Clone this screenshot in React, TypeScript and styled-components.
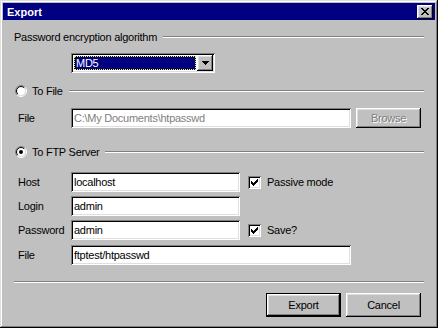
import React from "react";
import styled, { createGlobalStyle } from "styled-components";

const GlobalStyle = createGlobalStyle`
  body {
    margin: 0;
    background: #c0c0c0;
    font-family: "Liberation Sans", Arial, sans-serif;
    font-size: 11px;
    letter-spacing: -0.25px;
    color: #000;
  }
`;

const raised = `
  box-shadow: inset -1px -1px #000, inset 1px 1px #fff,
    inset -2px -2px #808080, inset 2px 2px #dfdfdf;
`;

const sunken = `
  box-shadow: inset 1px 1px #808080, inset -1px -1px #fff,
    inset 2px 2px #000, inset -2px -2px #dfdfdf;
`;

const Window = styled.div`
  width: 438px;
  height: 328px;
  box-sizing: border-box;
  padding: 3px;
  background: #c0c0c0;
  box-shadow: inset -1px -1px #000, inset 1px 1px #dfdfdf,
    inset -2px -2px #808080, inset 2px 2px #fff;
  display: flex;
  flex-direction: column;
`;

const TitleBar = styled.div`
  height: 17px;
  background: #000080;
  display: flex;
  align-items: center;
  justify-content: space-between;
  padding: 0 2px 0 4px;
`;

const Title = styled.span`
  color: #fff;
  font-weight: bold;
  font-size: 11px;
  letter-spacing: 0;
`;

const CloseButton = styled.div`
  width: 16px;
  height: 14px;
  background: #c0c0c0;
  ${raised}
  display: flex;
  align-items: center;
  justify-content: center;
`;

const Body = styled.div`
  display: flex;
  flex-direction: column;
  padding: 0 11px;
`;

const GroupHeader = styled.div<{ $top: number }>`
  margin-top: ${(p) => p.$top}px;
  height: 14px;
  display: flex;
  align-items: center;
  gap: 6px;
`;

const Groove = styled.div`
  flex: 1;
  height: 0;
  border-top: 1px solid #808080;
  border-bottom: 1px solid #fff;
`;

const RadioLabel = styled.label`
  display: flex;
  align-items: center;
  gap: 5px;
  padding-left: 1px;
`;

const SelectRow = styled.div`
  margin-top: 9px;
  padding-left: 57px;
  display: flex;
`;

const Combo = styled.div`
  width: 144px;
  height: 20px;
  box-sizing: border-box;
  padding: 2px;
  background: #fff;
  ${sunken}
  display: flex;
`;

const ComboValue = styled.div`
  flex: 1;
  margin: 1px;
  background: #000080;
  border: 1px dotted #ffff00;
  color: #fff;
  line-height: 12px;
  padding-left: 1px;
`;

const ComboButton = styled.div`
  width: 16px;
  height: 16px;
  background: #c0c0c0;
  ${raised}
  display: flex;
  align-items: center;
  justify-content: center;
`;

const FileRow = styled.div`
  margin-top: 10px;
  display: flex;
  align-items: center;
  gap: 5px;
  padding-left: 4px;
`;

const FieldLabel = styled.span`
  width: 53px;
  flex: none;
`;

const TextBox = styled.div<{ $width: number; $disabled?: boolean }>`
  width: ${(p) => p.$width}px;
  height: 20px;
  box-sizing: border-box;
  padding: 2px 3px;
  background: #fff;
  color: ${(p) => (p.$disabled ? "#808080" : "#000")};
  ${sunken}
  line-height: 16px;
  white-space: nowrap;
`;

const FileBox = styled(TextBox)`
  margin-left: -5px;
`;

const WideBox = styled(TextBox)`
  grid-column: 2 / 4;
`;

const Button = styled.div<{ $width: number; $default?: boolean; $disabled?: boolean }>`
  width: ${(p) => p.$width}px;
  height: 24px;
  box-sizing: border-box;
  background: #c0c0c0;
  border: ${(p) => (p.$default ? "1px solid #000" : "none")};
  ${raised}
  display: flex;
  align-items: center;
  justify-content: center;
  color: ${(p) => (p.$disabled ? "#808080" : "#000")};
  text-shadow: ${(p) => (p.$disabled ? "1px 1px #fff" : "none")};
`;

const BrowseButton = styled(Button)`
  height: 20px;
`;

const FtpGrid = styled.div`
  margin-top: 13px;
  display: grid;
  grid-template-columns: 53px 169px auto;
  grid-template-rows: 20px 20px 20px 21px;
  row-gap: 4px;
  align-items: center;
  padding-left: 4px;
`;

const CheckLabel = styled.label`
  display: flex;
  align-items: center;
  gap: 6px;
  margin-left: 8px;
`;

const CheckBox = styled.div`
  width: 13px;
  height: 13px;
  box-sizing: border-box;
  background: #fff;
  ${sunken}
  display: flex;
  align-items: center;
  justify-content: center;
`;

const Separator = styled.div`
  margin-top: 16px;
  border-top: 1px solid #808080;
  border-bottom: 1px solid #fff;
`;

const ButtonRow = styled.div`
  margin-top: 10px;
  display: flex;
  justify-content: flex-end;
  gap: 5px;
  padding-right: 3px;
`;

const Radio: React.FC<{ checked?: boolean }> = ({ checked }) => {
  const arc = (r: number, a: string, b: string) => {
    const d = r * Math.SQRT1_2;
    const bl = `${6 - d} ${6 + d}`;
    const tr = `${6 + d} ${6 - d}`;
    return (
      <>
        <path d={`M${bl} A${r} ${r} 0 0 1 ${tr}`} stroke={a} fill="none" />
        <path d={`M${tr} A${r} ${r} 0 0 1 ${bl}`} stroke={b} fill="none" />
      </>
    );
  };
  return (
    <svg width="12" height="12" viewBox="0 0 12 12">
      <circle cx="6" cy="6" r="4.5" fill="#fff" />
      {arc(5.5, "#808080", "#fff")}
      {arc(4.5, "#000", "#dfdfdf")}
      {checked && <circle cx="6" cy="6" r="2" fill="#000" />}
    </svg>
  );
};

const Check = () => (
  <svg width="7" height="7" viewBox="0 0 7 7">
    <path
      d="M6 0h1v1h-1z M5 1h2v1h-2z M0 2h1v1h-1z M4 2h3v1h-3z M0 3h2v1h-2z M3 3h3v1h-3z M0 4h5v1h-5z M1 5h3v1h-3z M2 6h1v1h-1z"
      fill="#000"
    />
  </svg>
);

const CloseGlyph = () => (
  <svg width="8" height="7" viewBox="0 0 8 7">
    <path
      d="M0 0h2v1h-2z M6 0h2v1h-2z M1 1h2v1h-2z M5 1h2v1h-2z M2 2h4v1h-4z M3 3h2v1h-2z M2 4h4v1h-4z M1 5h2v1h-2z M5 5h2v1h-2z M0 6h2v1h-2z M6 6h2v1h-2z"
      fill="#000"
    />
  </svg>
);

const DownArrow = () => (
  <svg width="7" height="4" viewBox="0 0 7 4">
    <path d="M0 0h7v1h-7z M1 1h5v1h-5z M2 2h3v1h-3z M3 3h1v1h-1z" fill="#000" />
  </svg>
);

const App: React.FC = () => {
  return (
    <>
      <GlobalStyle />
      <Window>
        <TitleBar>
          <Title>Export</Title>
          <CloseButton>
            <CloseGlyph />
          </CloseButton>
        </TitleBar>
        <Body>
          <GroupHeader $top={10}>
            <span>Password encryption algorithm</span>
            <Groove />
          </GroupHeader>
          <SelectRow>
            <Combo>
              <ComboValue>MD5</ComboValue>
              <ComboButton>
                <DownArrow />
              </ComboButton>
            </Combo>
          </SelectRow>

          <GroupHeader $top={11}>
            <RadioLabel>
              <Radio />
              To File
            </RadioLabel>
            <Groove />
          </GroupHeader>
          <FileRow>
            <FieldLabel>File</FieldLabel>
            <FileBox $width={280} $disabled>
              C:\My Documents\htpasswd
            </FileBox>
            <BrowseButton $width={65} $disabled>
              Browse
            </BrowseButton>
          </FileRow>

          <GroupHeader $top={17}>
            <RadioLabel>
              <Radio checked />
              To FTP Server
            </RadioLabel>
            <Groove />
          </GroupHeader>
          <FtpGrid>
            <FieldLabel>Host</FieldLabel>
            <TextBox $width={169}>localhost</TextBox>
            <CheckLabel>
              <CheckBox>
                <Check />
              </CheckBox>
              Passive mode
            </CheckLabel>
            <FieldLabel>Login</FieldLabel>
            <TextBox $width={169}>admin</TextBox>
            <span />
            <FieldLabel>Password</FieldLabel>
            <TextBox $width={169}>admin</TextBox>
            <CheckLabel>
              <CheckBox>
                <Check />
              </CheckBox>
              Save?
            </CheckLabel>
            <FieldLabel>File</FieldLabel>
            <WideBox $width={280}>ftptest/htpasswd</WideBox>
          </FtpGrid>

          <Separator />
          <ButtonRow>
            <Button $width={75} $default>
              Export
            </Button>
            <Button $width={75}>Cancel</Button>
          </ButtonRow>
        </Body>
      </Window>
    </>
  );
};

export default App;
